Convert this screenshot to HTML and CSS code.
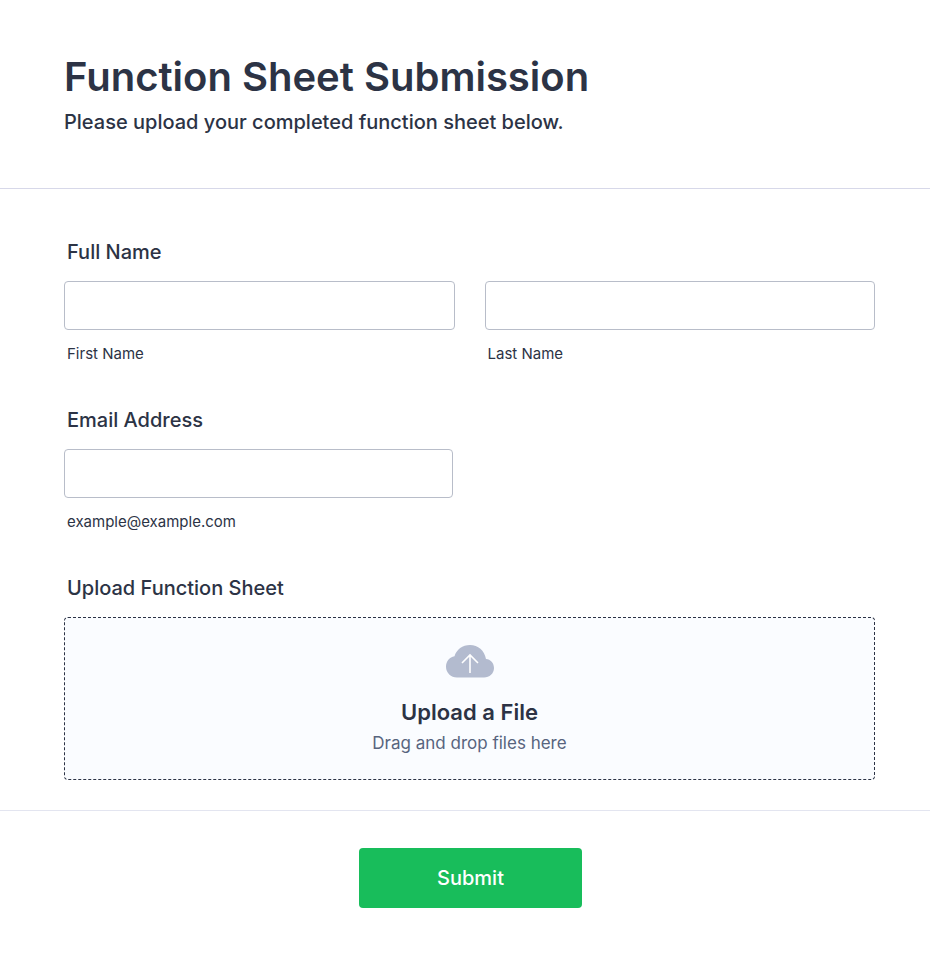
FILE: index.html
```html
<!DOCTYPE html>
<html lang="en">
<head>
<meta charset="utf-8">
<meta name="viewport" content="width=device-width, initial-scale=1">
<title>Function Sheet Submission</title>
<link rel="stylesheet" href="styles.css">
</head>
<body>
<form class="form">
  <header class="header">
    <h1 class="title">Function Sheet Submission</h1>
    <p class="subtitle">Please upload your completed function sheet below.</p>
  </header>
  <main class="fields">
    <fieldset class="field">
      <legend class="label">Full Name</legend>
      <div class="row">
        <div class="col">
          <input class="input" type="text" id="first">
          <label class="hint" for="first">First Name</label>
        </div>
        <div class="col">
          <input class="input" type="text" id="last">
          <label class="hint" for="last">Last Name</label>
        </div>
      </div>
    </fieldset>
    <div class="field">
      <label class="label" for="email">Email Address</label>
      <div class="half">
        <input class="input" type="email" id="email" aria-describedby="email-hint">
        <span class="hint" id="email-hint">example@example.com</span>
      </div>
    </div>
    <div class="field">
      <span class="label" id="upload-label">Upload Function Sheet</span>
      <button class="dropzone" type="button" aria-describedby="upload-label">
        <svg class="cloud" viewBox="0 0 48 34" aria-hidden="true">
          <path fill="#b3bbcf" d="M11 33.500C5 33.500 0 29 0 22.800C0 17.500 3.500 13.200 8.500 12.300C10.500 5.500 16.500 1 24 1C32 1 38.500 6.500 40 15C44.500 15.300 48 19 48 24C48 29.500 43.500 33.500 38 33.500Z"/>
          <path fill="none" stroke="#fff" stroke-width="1.600" d="M24 29V11M16 19L24 11L32 19"/>
        </svg>
        <span class="upload-title">Upload a File</span>
        <span class="upload-text">Drag and drop files here</span>
      </button>
    </div>
  </main>
  <footer class="footer">
    <button class="submit" type="submit">Submit</button>
  </footer>
</form>
</body>
</html>
```
FILE: styles.css
```css
* {
  box-sizing: border-box;
}

body {
  margin: 0;
  background: #fff;
  color: #2c3345;
  font-family: Inter, sans-serif;
}

.header {
  padding: 52px 64px 54px;
  border-bottom: 1px solid #d7d8e9;
}

.title {
  margin: 0;
  font-size: 40px;
  font-weight: 600;
  line-height: 50px;
}

.subtitle {
  margin: 8px 0 0;
  font-size: 20px;
  font-weight: 500;
  line-height: 24px;
}

.fields {
  display: flex;
  flex-direction: column;
  gap: 45px;
  padding: 51px 55px 30px 64px;
  border-bottom: 1px solid #e3e5f0;
}

.field {
  margin: 0;
  padding: 0;
  border: 0;
  min-width: 0;
}

.label {
  display: block;
  margin-bottom: 17px;
  padding: 0 3px;
  font-size: 20px;
  font-weight: 500;
  line-height: 24px;
}

.row {
  display: grid;
  grid-template-columns: 1fr 1fr;
  gap: 30px;
}

.half {
  width: 48%;
}

.input {
  display: block;
  width: 100%;
  height: 49px;
  padding: 0 12px;
  border: 1px solid #b8bdc9;
  border-radius: 4px;
  background: #fff;
  color: inherit;
  font: inherit;
}

.hint {
  display: block;
  margin-top: 15px;
  padding-left: 3px;
  font-size: 15px;
  line-height: 18px;
}

.dropzone {
  display: flex;
  flex-direction: column;
  align-items: center;
  width: 100%;
  padding: 26px 16px 25px;
  border: 1px dashed #2c3345;
  border-radius: 4px;
  background: #fafcff;
  color: inherit;
  font-family: inherit;
}

.cloud {
  width: 48px;
  height: 34px;
}

.upload-title {
  margin-top: 20px;
  font-size: 22px;
  font-weight: 600;
  line-height: 28px;
}

.upload-text {
  margin-top: 6px;
  color: #57647e;
  font-size: 17px;
  line-height: 22px;
}

.footer {
  display: flex;
  justify-content: center;
  padding: 37px 53px 49px 64px;
}

.submit {
  min-width: 223px;
  height: 60px;
  padding: 0 24px;
  border: 0;
  border-radius: 4px;
  background: #18bd5b;
  color: #fff;
  font-family: inherit;
  font-size: 20px;
  font-weight: 500;
}
```
